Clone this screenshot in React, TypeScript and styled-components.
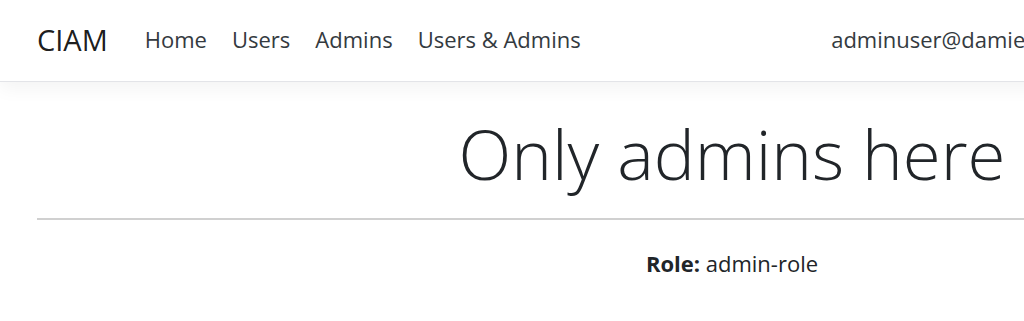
import React from 'react';
import styled, { createGlobalStyle } from 'styled-components';

const GlobalStyle = createGlobalStyle`
  html, body {
    margin: 0;
    padding: 0;
    overflow: hidden;
    background: #fff;
  }
  body {
    font-family: "Open Sans", "Noto Sans", sans-serif;
    color: #212529;
  }
`;

const Page = styled.div`
  width: 1464px;
`;

const NavBar = styled.nav`
  display: flex;
  align-items: center;
  box-sizing: border-box;
  height: 82px;
  padding: 0 37px 3px;
  background: #fff;
  border-bottom: 1px solid #e3e4e8;
  box-shadow: 0 6px 18px rgba(0, 0, 0, 0.05);
`;

const Brand = styled.a`
  font-size: 29px;
  color: rgba(0, 0, 0, 0.9);
  margin-right: 37px;
  text-decoration: none;
`;

const NavList = styled.ul`
  display: flex;
  list-style: none;
  margin: 0;
  padding: 0;
  flex: 1;
  gap: 25px;
`;

const NavLink = styled.a`
  font-size: 22px;
  color: #343a40;
  text-decoration: none;
`;

const UserName = styled.span`
  font-size: 22px;
  color: #343a40;
  margin-right: 168px;
`;

const Main = styled.main`
  padding: 0 37px;
  text-align: center;
`;

const Heading = styled.h1`
  font-size: 69px;
  font-weight: 300;
  line-height: 1.2;
  margin: 30px 0 0;
  color: #212529;
`;

const Rule = styled.hr`
  border: 0;
  border-top: 2px solid #d0d0d0;
  margin: 23px 0 0;
`;

const Info = styled.p`
  font-size: 22px;
  margin: 28px 0 0;
  color: #212529;
`;

export default function App() {
  return (
    <Page>
      <GlobalStyle />
      <NavBar>
        <Brand href="#">CIAM</Brand>
        <NavList>
          {['Home', 'Users', 'Admins', 'Users & Admins'].map((label) => (
            <li key={label}>
              <NavLink href="#">{label}</NavLink>
            </li>
          ))}
        </NavList>
        <UserName>adminuser@damienbod.onmicrosoft.com</UserName>
      </NavBar>
      <Main>
        <Heading>Only admins here</Heading>
        <Rule />
        <Info>
          <strong>Role:</strong> admin-role
        </Info>
      </Main>
    </Page>
  );
}
